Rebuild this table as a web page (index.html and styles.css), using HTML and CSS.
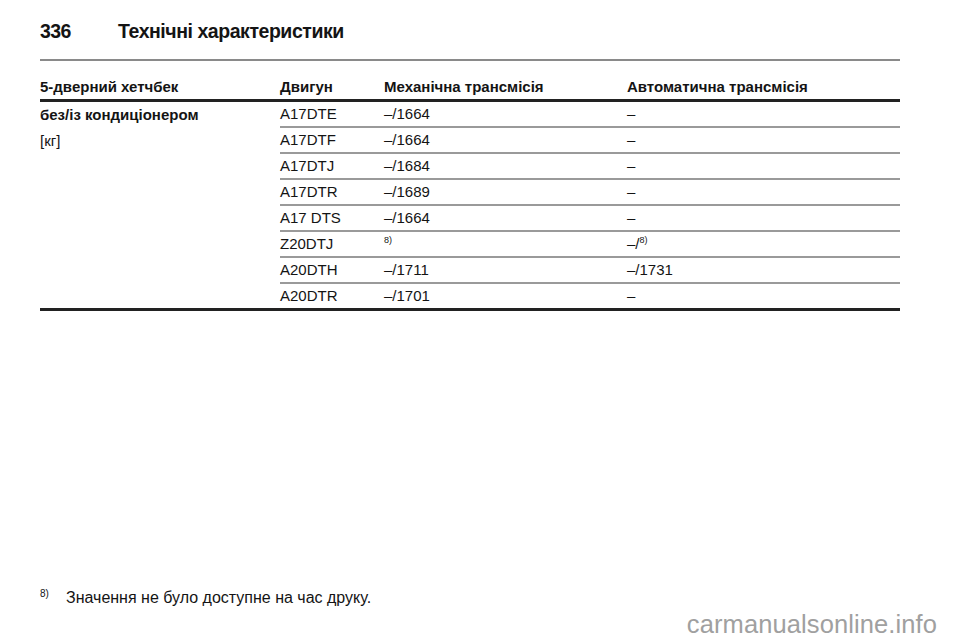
FILE: index.html
```html
<!DOCTYPE html>
<html lang="uk">
<head>
<meta charset="utf-8">
<title>336 Технічні характеристики</title>
<link rel="stylesheet" href="styles.css">
</head>
<body>
<div class="page">
  <header class="page-head">
    <span class="page-num">336</span>
    <span class="page-title">Технічні характеристики</span>
  </header>
  <table class="spec">
    <colgroup>
      <col class="c1"><col class="c2"><col class="c3"><col class="c4">
    </colgroup>
    <thead>
      <tr>
        <th>5-дверний хетчбек</th>
        <th>Двигун</th>
        <th>Механічна трансмісія</th>
        <th>Автоматична трансмісія</th>
      </tr>
    </thead>
    <tbody>
      <tr>
        <td class="group" rowspan="8"><b>без/із кондиціонером</b><br>[кг]</td>
        <td>A17DTE</td><td>–/1664</td><td>–</td>
      </tr>
      <tr><td>A17DTF</td><td>–/1664</td><td>–</td></tr>
      <tr><td>A17DTJ</td><td>–/1684</td><td>–</td></tr>
      <tr><td>A17DTR</td><td>–/1689</td><td>–</td></tr>
      <tr><td>A17 DTS</td><td>–/1664</td><td>–</td></tr>
      <tr><td>Z20DTJ</td><td><sup class="fn">8)</sup></td><td>–/<sup class="fn">8)</sup></td></tr>
      <tr><td>A20DTH</td><td>–/1711</td><td>–/1731</td></tr>
      <tr class="last"><td>A20DTR</td><td>–/1701</td><td>–</td></tr>
    </tbody>
  </table>
  <footer class="footnote">
    <span class="fn-mark">8)</span>
    <span class="fn-text">Значення не було доступне на час друку.</span>
  </footer>
  <div class="watermark">carmanualsonline.info</div>
</div>
</body>
</html>
```
FILE: styles.css
```css
html, body {
  margin: 0;
  padding: 0;
  background: #ffffff;
}
body {
  font-family: "Liberation Sans", Arial, sans-serif;
  color: #141414;
}
.page {
  position: relative;
  width: 960px;
  height: 642px;
  box-sizing: border-box;
  padding: 19px 60px 0 40px;
  display: flex;
  flex-direction: column;
  overflow: hidden;
}
.page-head {
  display: flex;
  align-items: baseline;
  font-size: 19.5px;
  line-height: 24px;
  font-weight: bold;
  padding-bottom: 16px;
  border-bottom: 2px solid #8a8a8a;
}
.page-num {
  width: 78px;
  letter-spacing: -0.6px;
}
.page-title {
  letter-spacing: -0.45px;
}
.spec {
  margin-top: 14px;
  width: 860px;
  border-collapse: collapse;
  font-size: 15px;
  line-height: 24px;
}
.spec col.c1 { width: 240px; }
.spec col.c2 { width: 104px; }
.spec col.c3 { width: 243px; }
.spec col.c4 { width: 273px; }
.spec th {
  text-align: left;
  font-weight: bold;
  padding: 0;
  border-bottom: 3px solid #222;
  white-space: nowrap;
}
.spec td {
  padding: 0;
  vertical-align: top;
  border-bottom: 2px solid #9a9a9a;
  white-space: nowrap;
}
.spec td.group {
  line-height: 26px;
  border-bottom: 3px solid #222;
}
.spec tr.last td {
  border-bottom: 3px solid #222;
}
.fn {
  font-size: 9px;
  line-height: 0;
  vertical-align: 6px;
}
.footnote {
  margin-top: auto;
  margin-bottom: 32px;
  display: flex;
  align-items: baseline;
  font-size: 16px;
  line-height: 20px;
}
.fn-mark {
  width: 26px;
  font-size: 10px;
  position: relative;
  top: -6px;
}
.watermark {
  position: absolute;
  right: 23px;
  bottom: 3px;
  font-size: 25.5px;
  line-height: 30px;
  color: #a0a0a0;
  letter-spacing: 0.1px;
}
```
